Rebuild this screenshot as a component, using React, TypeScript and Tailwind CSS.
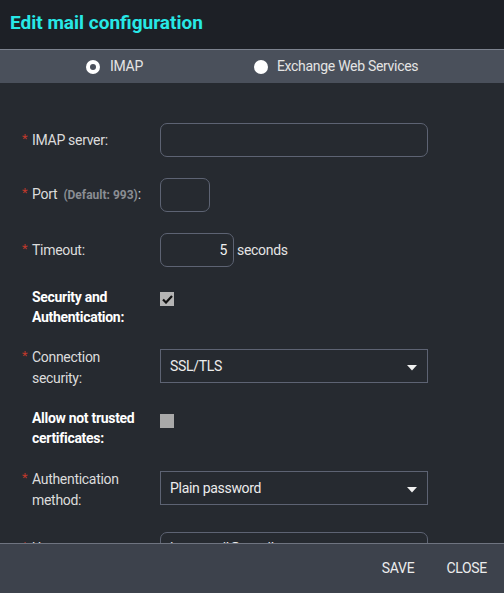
import React from "react";

const Req = () => <span className="text-[#c0392b] text-[13px] relative top-[-2px]">*</span>;

const Caret = () => (
    <svg width="10" height="6" viewBox="0 0 10 6" className="absolute right-[10px] top-[15px]">
        <path d="M0 0 L10 0 L5 5.5 Z" fill="#f0f0f0" />
    </svg>
);

type RowProps = {
    label: React.ReactNode;
    required?: boolean;
    bold?: boolean;
    top?: boolean;
    labelClass?: string;
    className?: string;
    children: React.ReactNode;
};

const Row: React.FC<RowProps> = ({ label, required, bold, top, labelClass, className, children }) => (
    <div className={"flex shrink-0 " + (top ? "items-start " : "items-center ") + (className ?? "")}>
        <div className={"w-[160px] shrink-0 pl-[22px] flex relative " + (labelClass ?? "")}>
            <span className="w-[10px] shrink-0">{required && <Req />}</span>
            <div className={bold ? "font-bold text-white leading-[20px]" : "text-[#dcdcdc] leading-[21px]"}>{label}</div>
        </div>
        {children}
    </div>
);

export default function App() {
    return (
        <div className="w-[504px] h-[593px] flex flex-col bg-[#262a30] overflow-hidden text-[14px] tracking-[-0.3px]" style={{ fontFamily: "Roboto, 'Liberation Sans', sans-serif" }}>
            <div className="h-[49px] shrink-0 bg-[#1d2026] flex items-center px-[10px] pb-[2px]">
                <h1 className="text-[19px] font-bold text-[#27e8e6] tracking-normal">Edit mail configuration</h1>
            </div>

            <div className="h-[34px] shrink-0 bg-[#4a505b] border-t border-[#7c828e] flex items-center text-[#e4e4e4]">
                <label className="flex items-center ml-[86px] gap-[10px]">
                    <span className="size-[14px] rounded-full bg-white flex items-center justify-center">
                        <span className="size-[6px] rounded-full bg-[#4a505b]" />
                    </span>
                    <span>IMAP</span>
                </label>
                <label className="flex items-center ml-[111px] gap-[9px]">
                    <span className="size-[14px] rounded-full bg-white" />
                    <span>Exchange Web Services</span>
                </label>
            </div>

            <div className="grow overflow-hidden pt-[40px] flex flex-col">
                <Row label="IMAP server:" required className="mb-[21px]">
                    <input className="w-[268px] h-[34px] rounded-[7px] border border-[#5d6373] bg-transparent outline-none" />
                </Row>
                <Row label={<span>Port <span className="text-[12px] font-bold text-[#8a8d93] ml-[3px] tracking-normal">(Default: 993)</span>:</span>} required className="mb-[21px]">
                    <input className="w-[50px] h-[34px] rounded-[7px] border border-[#5d6373] bg-transparent outline-none" />
                </Row>
                <Row label="Timeout:" required className="mb-[20px]">
                    <div className="flex items-center gap-[3px]">
                        <div className="w-[74px] h-[34px] rounded-[7px] border border-[#5d6373] flex items-center justify-end pr-[6px] text-[#f0f0f0]">5</div>
                        <span className="text-[#e4e4e4]">seconds</span>
                    </div>
                </Row>
                <Row label={<>Security and<br />Authentication:</>} bold top className="mb-[18px]">
                    <div className="size-[14px] bg-[#b4b4b4] flex items-center justify-center mt-[5px]">
                        <svg width="11" height="9" viewBox="0 0 11 9">
                            <path d="M1 4.5 L4 7.5 L10 1" stroke="#111" strokeWidth="2.2" fill="none" />
                        </svg>
                    </div>
                </Row>
                <Row label={<>Connection<br />security:</>} required labelClass="top-[2px]" className="mb-[21px]">
                    <div className="relative w-[268px] h-[34px] border border-[#5d6373] flex items-center px-[9px] text-[#ececec]">
                        SSL/TLS
                        <Caret />
                    </div>
                </Row>
                <Row label={<>Allow not trusted<br />certificates:</>} bold top className="mb-[19px]">
                    <div className="size-[14px] bg-[#a9a9a9] mt-[6px]" />
                </Row>
                <Row label={<>Authentication<br />method:</>} required labelClass="top-[2px]" className="mb-[23px]">
                    <div className="relative w-[268px] h-[34px] border border-[#5d6373] flex items-center px-[9px] text-[#ececec]">
                        Plain password
                        <Caret />
                    </div>
                </Row>
                <Row label="Username:" required top labelClass="mt-[6px]">
                    <div className="w-[268px] h-[34px] rounded-[7px] border border-[#5d6373] flex items-center px-[9px] pb-[1px] text-[#ececec]">
                        imap.mail@email.com
                    </div>
                </Row>
            </div>

            <div className="h-[50px] shrink-0 bg-[#3d424c] border-t border-[#6f7480] flex items-center justify-end gap-[32px] pr-[17px] text-[#ececec] text-[14px] pb-[1px]">
                <button>SAVE</button>
                <button>CLOSE</button>
            </div>
        </div>
    );
}
